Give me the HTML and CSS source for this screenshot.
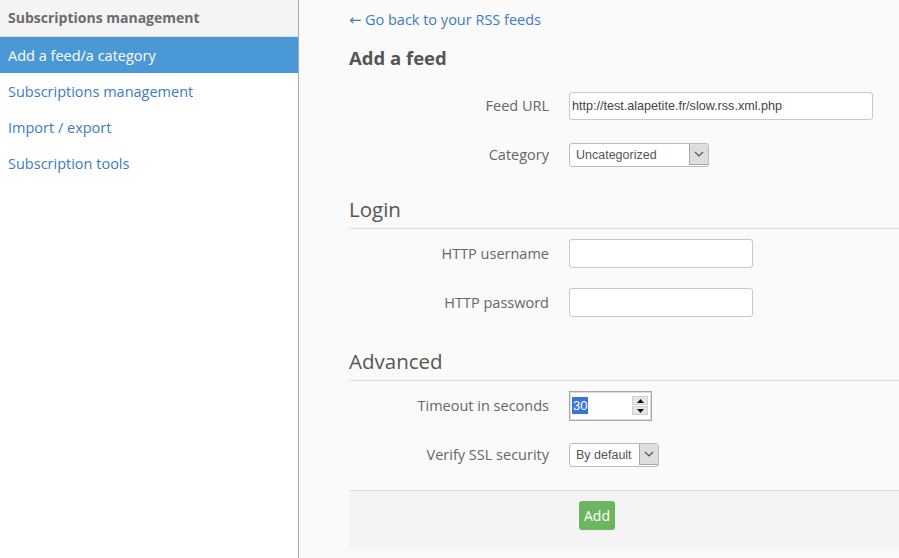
FILE: index.html
```html
<!DOCTYPE html>
<html lang="en">
<head>
<meta charset="utf-8">
<title>Subscriptions management</title>
<link rel="stylesheet" href="styles.css">
</head>
<body>
<div class="layout">
  <aside class="sidebar">
    <div class="side-head">Subscriptions management</div>
    <a class="side-item active" href="#">Add a feed/a category</a>
    <a class="side-item" href="#">Subscriptions management</a>
    <a class="side-item" href="#">Import / export</a>
    <a class="side-item" href="#">Subscription tools</a>
  </aside>
  <main class="main">
    <a class="back" href="#">← Go back to your RSS feeds</a>
    <h1 class="title">Add a feed</h1>
    <div class="row">
      <label class="label">Feed URL</label>
      <div class="input url">http://test.alapetite.fr/slow.rss.xml.php</div>
    </div>
    <div class="row">
      <label class="label">Category</label>
      <div class="select cat"><span class="sel-text">Uncategorized</span><span class="sel-arrow"><svg width="10" height="6" viewBox="0 0 10 6"><path d="M1 1 L5 5 L9 1" fill="none" stroke="#555" stroke-width="1.2"/></svg></span></div>
    </div>
    <h2 class="legend">Login</h2>
    <div class="row">
      <label class="label">HTTP username</label>
      <div class="input short"></div>
    </div>
    <div class="row">
      <label class="label">HTTP password</label>
      <div class="input short"></div>
    </div>
    <h2 class="legend legend-adv">Advanced</h2>
    <div class="row">
      <label class="label">Timeout in seconds</label>
      <div class="input number"><span class="selected">30</span><span class="spin"><span class="spin-btn"><svg width="7" height="4" viewBox="0 0 7 4"><path d="M0 4 L3.5 0 L7 4 Z" fill="#111"/></svg></span><span class="spin-btn"><svg width="7" height="4" viewBox="0 0 7 4"><path d="M0 0 L3.5 4 L7 0 Z" fill="#111"/></svg></span></span></div>
    </div>
    <div class="row">
      <label class="label">Verify SSL security</label>
      <div class="select ssl"><span class="sel-text">By default</span><span class="sel-arrow"><svg width="10" height="6" viewBox="0 0 10 6"><path d="M1 1 L5 5 L9 1" fill="none" stroke="#555" stroke-width="1.2"/></svg></span></div>
    </div>
    <div class="footer">
      <button class="btn" type="button">Add</button>
    </div>
  </main>
</div>
</body>
</html>
```
FILE: styles.css
```css
html, body {
  margin: 0;
  padding: 0;
}
body {
  font-family: "Open Sans", "DejaVu Sans", sans-serif;
  font-size: 14.5px;
  background: #fafafa;
  color: #666;
}
.layout {
  display: flex;
  min-height: 558px;
}
.sidebar {
  width: 298px;
  flex: none;
  background: #fff;
  border-right: 1px solid #a8a8a8;
  display: flex;
  flex-direction: column;
}
.side-head {
  height: 36px;
  line-height: 36px;
  padding: 0 8px;
  background: #f4f4f4;
  border-bottom: 1px solid #ddd;
  font-weight: bold;
  font-size: 14px;
  color: #6b6b6b;
}
.side-item {
  display: block;
  height: 36px;
  line-height: 38px;
  padding: 0 8px;
  color: #3a7dbf;
  text-decoration: none;
}
.side-item.active {
  background: #4b98d6;
  color: #fff;
}
.main {
  flex: 1;
  padding: 10px 0 0 50px;
  display: flex;
  flex-direction: column;
  min-width: 0;
}
.back {
  display: block;
  line-height: 20px;
  color: #3a7dbf;
  text-decoration: none;
}
.title {
  margin: 15px 0 11px;
  font-size: 18.5px;
  line-height: 25px;
  font-weight: bold;
  color: #555;
}
.row {
  height: 49px;
  display: flex;
  align-items: center;
  gap: 20px;
}
.label {
  width: 200px;
  flex: none;
  text-align: right;
  color: #666;
}
.input {
  box-sizing: border-box;
  background: #fff;
  border: 1px solid #c8c8c8;
  border-radius: 3px;
  font-family: "Liberation Sans", Arial, sans-serif;
  font-size: 12.6px;
  color: #444;
  display: flex;
  align-items: center;
  padding: 0 2px;
}
.url {
  width: 304px;
  height: 28px;
}
.short {
  width: 184px;
  height: 29px;
}
.number {
  width: 83px;
  height: 30px;
  border: 1px solid #a8a8a8;
  border-radius: 0;
  box-shadow: inset 0 0 0 1px #dcdcdc;
  padding: 0 2px 0 2px;
  justify-content: space-between;
  font-size: 13px;
}
.selected {
  background: #3875d7;
  color: #fff;
  line-height: 17px;
  padding: 0 1px;
}
.spin {
  display: flex;
  flex-direction: column;
  gap: 1px;
  margin-right: 1px;
}
.spin-btn {
  width: 16px;
  height: 9px;
  background: #e6e6e6;
  border: 1px solid #d0d0d0;
  box-sizing: border-box;
  display: flex;
  align-items: center;
  justify-content: center;
}
.select {
  box-sizing: border-box;
  height: 24px;
  background: #fff;
  border: 1px solid #bbb;
  border-radius: 3px;
  display: flex;
  align-items: stretch;
  justify-content: space-between;
  font-family: "Liberation Sans", Arial, sans-serif;
  font-size: 12.5px;
  color: #555;
}
.sel-text {
  display: flex;
  align-items: center;
  padding-left: 6px;
}
.sel-arrow {
  width: 18px;
  margin: 0 0 1px;
  background: #dedede;
  border-left: 1px solid #a8a8a8;
  border-bottom: 1px solid #a8a8a8;
  display: flex;
  align-items: center;
  justify-content: center;
}
.cat { width: 140px; }
.ssl { width: 90px; }
.legend {
  margin: 0;
  padding: 15px 0 4px;
  line-height: 30px;
  font-size: 20.5px;
  font-weight: normal;
  color: #555;
  border-bottom: 1px solid #ddd;
}
.legend-adv {
  padding-top: 19px;
  padding-bottom: 4px;
}
.footer {
  margin-top: 11px;
  height: 59px;
  box-sizing: border-box;
  background: #f4f4f4;
  border-top: 1px solid #ddd;
  padding: 10px 0 0 230px;
}
.btn {
  height: 29px;
  width: 36px;
  padding: 0;
  border: none;
  border-radius: 3px;
  background: #6cb661;
  color: #fff;
  font-family: "Open Sans", sans-serif;
  font-size: 14px;
}
```
